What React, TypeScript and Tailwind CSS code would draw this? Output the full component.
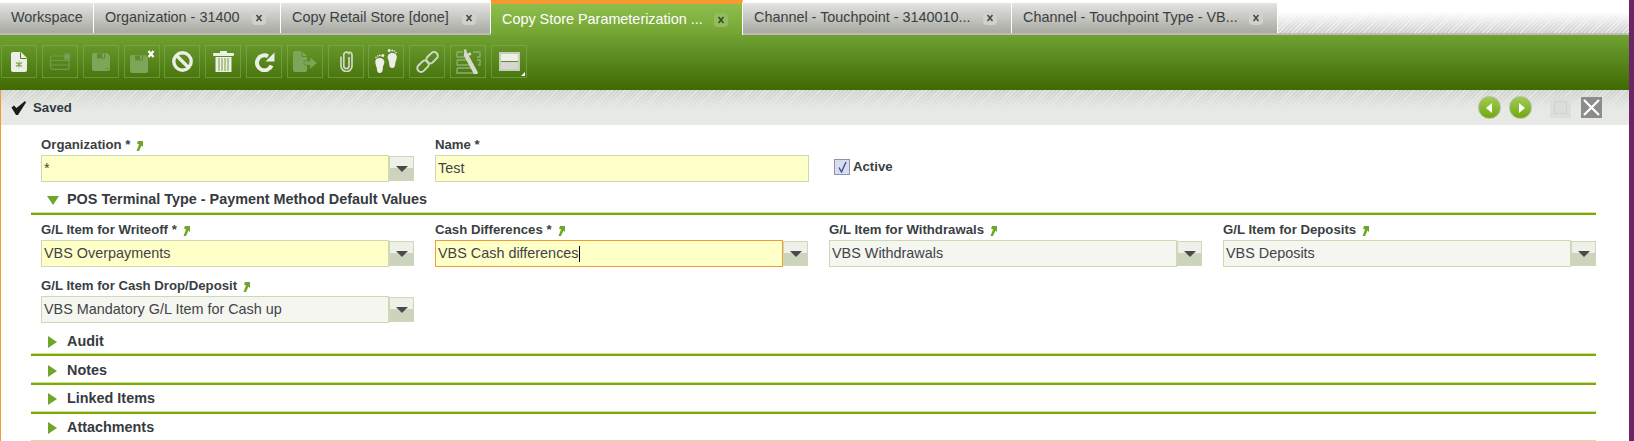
import React from 'react';

const tabs = [
  { label: 'Workspace', w: 'w-[94px]', close: false },
  { label: 'Organization - 31400', w: 'w-[187px]', close: true },
  { label: 'Copy Retail Store [done]', w: 'w-[210px]', close: true },
  { label: 'Copy Store Parameterization ...', w: 'w-[252px]', close: true, active: true },
  { label: 'Channel - Touchpoint - 3140010...', w: 'w-[269px]', close: true },
  { label: 'Channel - Touchpoint Type - VB...', w: 'w-[266px]', close: true },
];

const light = '#eceee8';
const dim = '#7ea55a';

function ToolIcon({ name }: { name: string }) {
  switch (name) {
    case 'new':
      return (
        <svg width="16" height="20" viewBox="0 0 16 20">
          <path d="M2 0h8l6 6v12a2 2 0 0 1-2 2H2a2 2 0 0 1-2-2V2a2 2 0 0 1 2-2z" fill={light} />
          <path d="M9.500 0.500v6h6" fill="none" stroke="#4f7d18" strokeWidth="1" />
          <path d="M8 9.500v6M5 10.500l6 4M11 10.500l-6 4" stroke="#7fa84a" strokeWidth="1.200" />
        </svg>
      );
    case 'form':
      return (
        <svg width="21" height="17" viewBox="0 0 21 17" fill="none" stroke="#739a4c" strokeWidth="1.200">
          <rect x="0.600" y="3" width="18.500" height="13.400" rx="2" />
          <path d="M0.600 7.500h18.500M0.600 12h18.500" />
          <circle cx="17" cy="3.500" r="3" fill="#7ba155" />
        </svg>
      );
    case 'save':
      return (
        <svg width="18" height="18" viewBox="0 0 18 18">
          <path d="M2 0h13l3 3v13a2 2 0 0 1-2 2H2a2 2 0 0 1-2-2V2a2 2 0 0 1 2-2z" fill={dim} />
          <rect x="5" y="0.500" width="8" height="5" fill="#5f8b2d" />
          <rect x="10" y="1" width="2" height="3.500" fill={dim} />
          <circle cx="15" cy="15.500" r="0.700" fill="#4f7a20" />
        </svg>
      );
    case 'saveclose':
      return (
        <svg width="25" height="23" viewBox="0 0 25 23">
          <path d="M2 5h13l3 3v13a2 2 0 0 1-2 2H2a2 2 0 0 1-2-2V7a2 2 0 0 1 2-2z" fill={dim} />
          <rect x="5" y="5.500" width="8" height="5" fill="#5f8b2d" />
          <rect x="10" y="6" width="2" height="3.500" fill={dim} />
          <path d="M18.500 1l5 6M23.500 1l-5 6" stroke="#ffffff" strokeWidth="2.200" />
        </svg>
      );
    case 'undo':
      return (
        <svg width="21" height="21" viewBox="0 0 21 21" fill="none" stroke={light} strokeWidth="3.400">
          <circle cx="10.500" cy="10.500" r="8.700" />
          <path d="M4.500 4.500l12 12" />
        </svg>
      );
    case 'trash':
      return (
        <svg width="21" height="21" viewBox="0 0 21 21">
          <rect x="0" y="2" width="21" height="3" rx="1" fill={light} />
          <rect x="7" y="0" width="7" height="2" fill={light} />
          <path d="M2.500 6h16v15h-16z" fill={light} />
          <path d="M6 7v13M9 7v13M12 7v13M15 7v13" stroke="#72a036" strokeWidth="1" />
        </svg>
      );
    case 'refresh':
      return (
        <svg width="21" height="20" viewBox="0 0 21 20" fill="none">
          <path d="M17.500 13.500A7.500 7.500 0 1 1 14 4.200" stroke={light} strokeWidth="4" />
          <path d="M11.500 9.500h9V0.500z" fill={light} />
        </svg>
      );
    case 'export':
      return (
        <svg width="24" height="21" viewBox="0 0 24 21">
          <path d="M2 0h7l5 5v14a2 2 0 0 1-2 2H2a2 2 0 0 1-2-2V2a2 2 0 0 1 2-2z" fill={dim} />
          <path d="M9 0v5.500h5.500" fill="none" stroke="#5f8b2d" strokeWidth="1" />
          <path d="M11 10h6V6l7 6-7 6v-4h-6z" fill={dim} stroke="#5f8b2d" strokeWidth="0.700" />
        </svg>
      );
    case 'clip':
      return (
        <svg width="13" height="21" viewBox="0 0 13 21" fill="none" stroke="#d2d8c8" strokeWidth="1.700">
          <path d="M9 6v9a2.600 2.600 0 0 1-5.200 0V4a2.600 2.600 0 0 1 5.200-0.500" />
          <path d="M1 5.500V15a5.500 5.500 0 0 0 11 0V4A3 3 0 0 0 9 1" />
        </svg>
      );
    case 'feet':
      return (
        <svg width="22" height="25" viewBox="0 0 22 25" fill={light}>
          <path d="M0.300 12.500c0-2.500 2-3.500 4.500-3.500s5 1.500 4.500 5c-.3 2-1.500 3-1.500 5.500 0 3-1.200 4.500-3 4.500S2 23 2 20.500c0-2.500-1.700-4.500-1.700-8z" />
          <path d="M21.700 7.500c0-2.500-2-3.500-4.500-3.500s-5 1.500-4.500 5c.3 2 1.500 3 1.500 5.500 0 3 1.200 4.500 3 4.500s3-1.500 3-4c0-2.500 1.700-4.500 1.700-8z" />
          <circle cx="1" cy="8.500" r="0.800" />
          <circle cx="2.800" cy="7" r="0.800" />
          <circle cx="4.800" cy="6.400" r="0.900" />
          <circle cx="7.800" cy="6.600" r="1.500" />
          <circle cx="21" cy="3.500" r="0.800" />
          <circle cx="19.200" cy="2" r="0.800" />
          <circle cx="17.200" cy="1.400" r="0.900" />
          <circle cx="14.200" cy="1.600" r="1.500" />
        </svg>
      );
    case 'link':
      return (
        <svg width="23" height="22" viewBox="0 0 23 22" fill="none" stroke="#d3d8ca" strokeWidth="2">
          <rect x="0.500" y="11.500" width="13" height="7.500" rx="3.700" transform="rotate(-45 7 15.200)" />
          <rect x="9.500" y="3" width="13" height="7.500" rx="3.700" transform="rotate(-45 16 6.700)" />
        </svg>
      );
    case 'tools':
      return (
        <svg width="25" height="25" viewBox="0 0 25 25" fill="none">
          <path d="M7 3H1v5h9M17 3h7v5h-3M1 11h12M21 11h3v5h-2M1 11v5h14M1 19h17M1 19v5h17" stroke="#8fae70" strokeWidth="1.300" />
          <path d="M10 6l9.500 17.500" stroke="#d6dacd" strokeWidth="4.400" strokeLinecap="round" />
          <path d="M9 0.500l1 6 5-2" stroke="#d6dacd" strokeWidth="2.600" />
        </svg>
      );
    default:
      return (
        <svg width="21" height="19" viewBox="0 0 21 19">
          <rect x="0" y="0" width="21" height="19" fill="#c5cfb8" />
          <rect x="2" y="2" width="17" height="7" fill="#edefe9" />
          <rect x="2" y="10" width="17" height="7" fill="#d6d8d0" />
          <rect x="2" y="9" width="17" height="1" fill="#5f8b2d" />
        </svg>
      );
  }
}

const tools = [
  { name: 'new' },
  { name: 'form' },
  { name: 'save' },
  { name: 'saveclose' },
  { name: 'undo', cls: 'ml-[-1px]' },
  { name: 'trash' },
  { name: 'refresh' },
  { name: 'export' },
  { name: 'clip' },
  { name: 'feet', cls: 'ml-[-1px]' },
  { name: 'link' },
  { name: 'tools' },
  { name: 'panel' },
];

function RefIcon() {
  return (
    <svg width="7" height="10" viewBox="0 0 7 10" className="ml-[6px] shrink-0">
      <path d="M2 0h5v6L5.500 4.500 3 10H0.500L3 3.500 1 2.500z" fill="#6fa52a" />
    </svg>
  );
}

function Field({ label, value, required, combo = true, focus, mandatory }: { label: string; value: string; required?: boolean; combo?: boolean; focus?: boolean; mandatory?: boolean }) {
  return (
    <div className="w-[394px] shrink-0">
      <div className="h-[25px] pb-[3px] flex items-end text-[13.2px] font-bold text-[#3a3f44] leading-[14px] whitespace-pre">
        {label}{required && ' *'}{combo && <span className="h-[12px] flex items-center"><RefIcon /></span>}
      </div>
      <div className="flex">
        <div className={`${combo ? 'w-[348px]' : 'w-[374px]'} h-[27px] flex items-center pl-[2px] pt-[1px] text-[14.4px] text-[#3f4448] border ${focus ? 'border-[#f39a30]' : 'border-[#cdd8b4]'} ${mandatory ? 'bg-[#ffffc8]' : 'bg-[#f4f6ef]'}`}>
          {value}
          {focus && <span className="w-px h-[16px] bg-black" />}
        </div>
        {combo && (
          <div className="w-[25px] h-[25px] mt-px border border-[#cdd8b4] bg-[linear-gradient(#eff1e9_50%,#cdd4bd_50%)] flex items-center justify-center">
            <span className="w-0 h-0 border-x-[6px] border-x-transparent border-t-[6px] border-t-[#4a4a4a]" />
          </div>
        )}
      </div>
    </div>
  );
}

function Section({ label, open, h, pt, last }: { label: string; open?: boolean; h: string; pt: string; last?: boolean }) {
  return (
    <div className={`${h} ml-[-10px] w-[1565px] flex flex-col`}>
      <div className={`flex-1 flex items-center ${pt}`}>
        <div className="w-[36px] pl-[16px] flex items-center">
          {open ? (
            <span className="w-0 h-0 mt-[1px] border-x-[6px] border-x-transparent border-t-[9px] border-t-[#6fa52a]" />
          ) : (
            <span className="w-0 h-0 ml-[1px] border-y-[6px] border-y-transparent border-l-[9px] border-l-[#6fa52a]" />
          )}
        </div>
        <span className="text-[14.4px] font-bold text-[#363b40]">{label}</span>
      </div>
      <div className="h-px bg-[#cfe0a0]" />
      {!last && <div className="h-[2px] bg-[#7aab00]" />}
    </div>
  );
}

export default function App() {
  return (
    <div className="w-[1634px] h-[441px] overflow-hidden flex font-['Liberation_Sans',sans-serif]">
      <div className="w-[1629px] bg-white flex flex-col shrink-0">
        {/* Tabs */}
        <div className="h-[35px] shrink-0 flex items-start border-b-2 border-[#bcbdb9] bg-[linear-gradient(#ffffff_35%,#ffffff00),repeating-linear-gradient(135deg,#e6e6e6_0,#e6e6e6_1px,#cfcfcf_1px,#cfcfcf_3px)]">
          {tabs.map((t) => (
            <div
              key={t.label}
              className={`${t.w} shrink-0 flex items-center justify-between pl-[11px] pr-[14px] text-[14.4px] border-r border-white ${
                t.active
                  ? 'relative h-[35px] border-t-[4px] border-t-[#f59a30] bg-gradient-to-b from-[#8fbe4d] to-[#73a432] text-white'
                  : 'mt-[3px] h-[30px] bg-gradient-to-b from-[#e4e5e1] to-[#a7a9a2] text-[#3b3f42]'
              }`}
            >
              <span className="whitespace-nowrap">{t.label}</span>
              {t.close && (
                <span className={`w-[14px] h-[14px] rounded-[4px] flex items-center justify-center ${t.active ? 'bg-[#94bb60]' : 'bg-[#d0d1cc]'}`}>
                  <svg width="8" height="8" viewBox="0 0 8 8">
                    <path d="M1.500 1l5 6M6.500 1l-5 6" stroke={t.active ? '#34501a' : '#484848'} strokeWidth="1.600" />
                  </svg>
                </span>
              )}
            </div>
          ))}
        </div>

        {/* Toolbar */}
        <div className="h-[55px] shrink-0 bg-gradient-to-b from-[#70a232] to-[#3f6a00] flex items-start pt-[10px] pl-px gap-[5px]">
          {tools.map((n) => (
            <div key={n.name} className={`${n.cls ?? ''} relative w-[36px] h-[33px] shrink-0 border border-[#8ab356]/50 flex items-center justify-center`}>
              <ToolIcon name={n.name} />
              {n.name === 'panel' && <span className="absolute right-px bottom-px w-0 h-0 border-l-[4px] border-l-transparent border-b-[4px] border-b-white" />}
            </div>
          ))}
        </div>

        <div className="flex-1 border-l border-[#f59a30] min-h-0">
          {/* Message bar */}
          <div className="h-[35px] flex items-center pl-[10px] bg-[linear-gradient(#e7e9e400,#e7e9e4_55%),repeating-linear-gradient(135deg,#e4e6e1_0,#e4e6e1_1px,#d0d2cd_1px,#d0d2cd_3px)]">
            <svg width="15" height="14" viewBox="0 0 15 14">
              <path d="M0.500 6.500L3 4.500l2.500 2.500L14 0l1 1.500L7 14H5z" fill="#1c1c1c" />
            </svg>
            <span className="ml-[7px] text-[13.2px] font-bold text-[#333a44]">Saved</span>
            <div className="ml-auto flex items-center mr-[27px]">
              <span className="w-[23px] h-[23px] rounded-full border border-[#b5bcaa] bg-gradient-to-b from-[#a0cc50] to-[#71a800] flex items-center justify-center">
                <span className="w-0 h-0 mr-[2px] border-y-[5px] border-y-transparent border-r-[6px] border-r-white" />
              </span>
              <span className="ml-[8px] w-[23px] h-[23px] rounded-full border border-[#b5bcaa] bg-gradient-to-b from-[#a0cc50] to-[#71a800] flex items-center justify-center">
                <span className="w-0 h-0 ml-[2px] border-y-[5px] border-y-transparent border-l-[6px] border-l-white" />
              </span>
              <span className="ml-[18px] w-[21px] h-[21px] bg-[#dcdedb] flex items-center justify-center">
                <span className="w-[13px] h-[13px] border border-[#cfd1ce]" />
              </span>
              <span className="ml-[10px] w-[21px] h-[21px] bg-[#8c8c8c] flex items-center justify-center">
                <svg width="17" height="17" viewBox="0 0 17 17">
                  <path d="M1 1l15 15M16 1L1 16" stroke="#ffffff" strokeWidth="2.200" />
                </svg>
              </span>
            </div>
          </div>

          {/* Form */}
          <div className="pl-[40px]">
            <div className="flex pt-[5px]">
              <Field label="Organization" value="*" required mandatory />
              <Field label="Name" value="Test" required mandatory combo={false} />
              <div className="mt-[25px] ml-[5px] h-[27px] pb-[3px] flex items-center">
                <span className="w-[16px] h-[16px] border border-[#8d94a8] bg-[#d9deee] flex items-center justify-center">
                  <svg width="11" height="12" viewBox="0 0 11 12">
                    <path d="M2 6.500l2.500 4.500L9 1" fill="none" stroke="#3d4fa0" strokeWidth="1.400" />
                  </svg>
                </span>
                <span className="ml-[3px] text-[13.2px] font-bold text-[#3a3f44]">Active</span>
              </div>
            </div>

            <Section label="POS Terminal Type - Payment Method Default Values" open h="h-[33px]" pt="pt-[6px]" />

            <div className="flex">
              <Field label="G/L Item for Writeoff" value="VBS Overpayments" required mandatory />
              <Field label="Cash Differences" value="VBS Cash differences" required mandatory focus />
              <Field label="G/L Item for Withdrawals" value="VBS Withdrawals" />
              <Field label="G/L Item for Deposits" value="VBS Deposits" />
            </div>
            <div className="flex mt-[4px]">
              <Field label="G/L Item for Cash Drop/Deposit" value="VBS Mandatory G/L Item for Cash up" />
            </div>

            <Section label="Audit" h="h-[33px]" pt="pt-[8px]" />
            <Section label="Notes" h="h-[29px]" pt="pt-[4px]" />
            <Section label="Linked Items" h="h-[29px]" pt="pt-[2px]" />
            <Section label="Attachments" h="h-[27px]" pt="pt-[2px]" last />
          </div>
        </div>
      </div>
      <div className="flex-1 bg-[#6b2466]" />
    </div>
  );
}
